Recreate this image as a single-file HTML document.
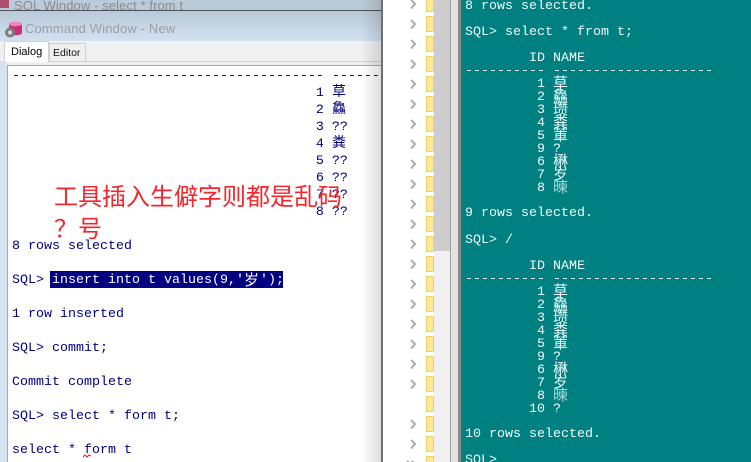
<!DOCTYPE html>
<html><head><meta charset="utf-8"><style>
html,body{margin:0;padding:0;background:#fff}
#p{position:relative;width:751px;height:462px;overflow:hidden;background:#fff}
.a{position:absolute}
.l,.r{position:absolute;left:0;top:2px;width:751px;height:462px}
pre{margin:0;position:absolute;font:13.33px/16px "Liberation Mono","Noto Sans CJK SC",monospace;white-space:pre}
.l pre{left:12px;color:#000080}
.r pre{left:465px;color:#eefcfc}
.c{display:inline-block;width:16px;font-size:14px;font-family:"Noto Sans CJK SC",sans-serif;line-height:16px;vertical-align:top;position:relative;top:-3px}
.r .c{font-size:15px;top:-2px}
</style></head><body><div id="p">
<div class="a" style="left:0;top:0;width:382px;height:10px;background:#bccbd9;overflow:hidden">
<div class="a" style="left:14px;top:-2px;font:13px/16px 'Liberation Sans',sans-serif;color:#858b92;white-space:nowrap;letter-spacing:.1px">SQL Window - select * from t</div>
<svg class="a" style="left:0;top:0" width="12" height="10"><path d="M0 0h9v8H0z" fill="#b0506f"/></svg>
</div>
<div class="a" style="left:0;top:10px;width:381px;height:1px;background:#4d5156"></div>
<div class="a" style="left:0;top:11px;width:381px;height:30px;background:linear-gradient(#b9c9d8,#d2e1f1)"></div>
<div class="a" style="left:25px;top:21px;font:13px/16px 'Liberation Sans',sans-serif;color:#9a9fa5;white-space:nowrap;letter-spacing:.15px">Command Window - New</div>
<svg class="a" style="left:4px;top:21px" width="18" height="17"><path d="M5 3c0-3 13-3 13 0v9c0 3-13 3-13 0z" fill="#c9307a"/><ellipse cx="11.500" cy="3" rx="6.500" ry="2.200" fill="#ef8ab8"/><circle cx="6" cy="11.500" r="5" fill="#7c7c7c"/><circle cx="6" cy="11.500" r="2" fill="#dcdcdc"/></svg>
<div class="a" style="left:0;top:41px;width:381px;height:421px;background:#f0f0f0"></div>
<div class="a" style="left:0;top:41px;width:7px;height:421px;background:#d6e4f2"></div>
<div class="a" style="left:0;top:41px;width:4px;height:20px;background:#f0f0f0"></div>
<div class="a" style="left:49px;top:43px;width:37px;height:18px;background:#f0f0f0;border:1px solid #d0d0d0;border-bottom:0;box-sizing:border-box;font:10.5px/18px 'Liberation Sans',sans-serif;color:#111;padding-left:3px">Editor</div>
<div class="a" style="left:4px;top:41px;width:45px;height:21px;background:#fff;border:1px solid #d0d0d0;border-bottom:0;box-sizing:border-box;font:11px/20px 'Liberation Sans',sans-serif;color:#000;padding-left:6px">Dialog</div>
<div class="a" style="left:4px;top:61px;width:377px;height:1px;background:#d0d0d0"></div>
<div class="a" style="left:49px;top:61px;width:0;height:0"></div>
<div class="a" style="left:5px;top:61px;width:43px;height:1px;background:#fff"></div>
<div class="a" style="left:7px;top:65px;width:374px;height:397px;background:#fff;border-left:1px solid #a8a8a8;border-top:1px solid #a8a8a8;box-sizing:border-box"></div>
<div class="l">
<pre style="top:67px">--------------------------------------- ------</pre>
<pre style="top:84px">                                      1 <span class="c">草</span></pre>
<pre style="top:101px">                                      2 <span class="c">鱻</span></pre>
<pre style="top:118px">                                      3 ??</pre>
<pre style="top:135px">                                      4 <span class="c">粪</span></pre>
<pre style="top:152px">                                      5 ??</pre>
<pre style="top:169px">                                      6 ??</pre>
<pre style="top:186px">                                      7 ??</pre>
<pre style="top:203px">                                      8 ??</pre>
<pre style="top:237px">8 rows selected</pre>
<pre style="top:271px">SQL></pre>
<div class="a" style="left:50px;top:269px;width:233px;height:17px;background:#000080"></div>
<pre style="top:271px;left:52px;color:#fff">insert into t values(9,'<span class="c" style="font-size:15px;top:-1px">岁</span>');</pre>
<pre style="top:305px">1 row inserted</pre>
<pre style="top:339px">SQL> commit;</pre>
<pre style="top:373px">Commit complete</pre>
<pre style="top:407px">SQL> select * form t;</pre>
<pre style="top:441px">select * form t</pre>
</div>
<svg class="a" style="left:83px;top:454px" width="8" height="5"><path d="M0 3l2-2 2 2 2-2 2 1" fill="none" stroke="#e02020"/></svg>
<div class="a" style="left:54px;top:179px;width:300px;font:24px/32px 'Noto Sans CJK SC',sans-serif;color:#f4252c">工具插入生僻字则都是乱码<br>？号</div>
<div class="a" style="left:361px;top:0;width:20px;height:462px;background:linear-gradient(90deg,rgba(0,0,0,0),rgba(0,0,0,.13))"></div>
<div class="a" style="left:381px;top:0;width:2px;height:462px;background:#6f6f6f"></div>
<div class="a" style="left:383px;top:0;width:51px;height:462px;background:#fff"></div>
<svg class="a" style="left:383px;top:0" width="51" height="462">
<g fill="#ffe897" stroke="#efcf62" stroke-width="1">
<path d="M43.500-4.500h7v16h-7zM43.500 16.500h7v15h-7zM43.500 36.500h7v15h-7zM43.500 56.500h7v15h-7zM43.500 76.500h7v15h-7zM43.500 96.500h7v15h-7zM43.500 116.500h7v15h-7zM43.500 136.500h7v15h-7zM43.500 156.500h7v15h-7zM43.500 176.500h7v15h-7zM43.500 196.500h7v15h-7zM43.500 216.500h7v15h-7zM43.500 236.500h7v15h-7zM43.500 256.500h7v15h-7zM43.500 276.500h7v15h-7zM43.500 296.500h7v15h-7zM43.500 316.500h7v15h-7zM43.500 336.500h7v15h-7zM43.500 356.500h7v15h-7zM43.500 376.500h7v15h-7zM43.500 396.500h7v15h-7zM43.500 416.500h7v15h-7zM43.500 436.500h7v15h-7zM43.500 456.500h7v15h-7z"/>
</g>
<path fill="none" stroke="#ababab" stroke-width="2" d="M28 0l4 4-4 4.500M28 20l4 4-4 4.500M28 40l4 4-4 4.500M28 60l4 4-4 4.500M28 80l4 4-4 4.500M28 100l4 4-4 4.500M28 120l4 4-4 4.500M28 140l4 4-4 4.500M28 160l4 4-4 4.500M28 180l4 4-4 4.500M28 200l4 4-4 4.500M28 220l4 4-4 4.500M28 240l4 4-4 4.500M28 260l4 4-4 4.500M28 280l4 4-4 4.500M28 300l4 4-4 4.500M28 320l4 4-4 4.500M28 340l4 4-4 4.500M28 360l4 4-4 4.500M28 380l4 4-4 4.500M28 420l4 4-4 4.500M28 440l4 4-4 4.500M24 461l2 2M30 461l-2 2"/>
</svg>
<div class="a" style="left:434px;top:0;width:16px;height:462px;background:#f0f0f0"></div>
<div class="a" style="left:434px;top:0;width:16px;height:251px;background:#cdcdcd"></div>
<div class="a" style="left:450px;top:0;width:1px;height:462px;background:#a0a0a0"></div>
<div class="a" style="left:451px;top:0;width:7px;height:462px;background:#e2e2e2"></div>
<div class="a" style="left:458px;top:0;width:3px;height:462px;background:#8a8a8a"></div>
<div class="a" style="left:461px;top:0;width:290px;height:462px;background:#008080"></div>
<div class="r">
<pre style="top:-3px">8 rows selected.</pre>
<pre style="top:23px">SQL> select * from t;</pre>
<pre style="top:49px">        ID NAME</pre>
<pre style="top:62px">---------- --------------------</pre>
<pre style="top:75px">         1 <span class="c">草</span></pre>
<pre style="top:88px">         2 <span class="c">鱻</span></pre>
<pre style="top:101px">         3 <span class="c">瓒</span></pre>
<pre style="top:114px">         4 <span class="c">粪</span></pre>
<pre style="top:127px">         5 <span class="c">莗</span></pre>
<pre style="top:140px">         9 ?</pre>
<pre style="top:153px">         6 <span class="c">楙</span></pre>
<pre style="top:166px">         7 <span class="c">岁</span></pre>
<pre style="top:179px">         8 <span class="c" style="color:#a8d4d4">暕</span></pre>
<pre style="top:204px">9 rows selected.</pre>
<pre style="top:231px">SQL> /</pre>
<pre style="top:257px">        ID NAME</pre>
<pre style="top:270px">---------- --------------------</pre>
<pre style="top:283px">         1 <span class="c">草</span></pre>
<pre style="top:296px">         2 <span class="c">鱻</span></pre>
<pre style="top:309px">         3 <span class="c">瓒</span></pre>
<pre style="top:322px">         4 <span class="c">粪</span></pre>
<pre style="top:335px">         5 <span class="c">莗</span></pre>
<pre style="top:348px">         9 ?</pre>
<pre style="top:361px">         6 <span class="c">楙</span></pre>
<pre style="top:374px">         7 <span class="c">岁</span></pre>
<pre style="top:387px">         8 <span class="c" style="color:#a8d4d4">暕</span></pre>
<pre style="top:400px">        10 ?</pre>
<pre style="top:425px">10 rows selected.</pre>
<pre style="top:451px">SQL></pre>
</div>
</div></body></html>
